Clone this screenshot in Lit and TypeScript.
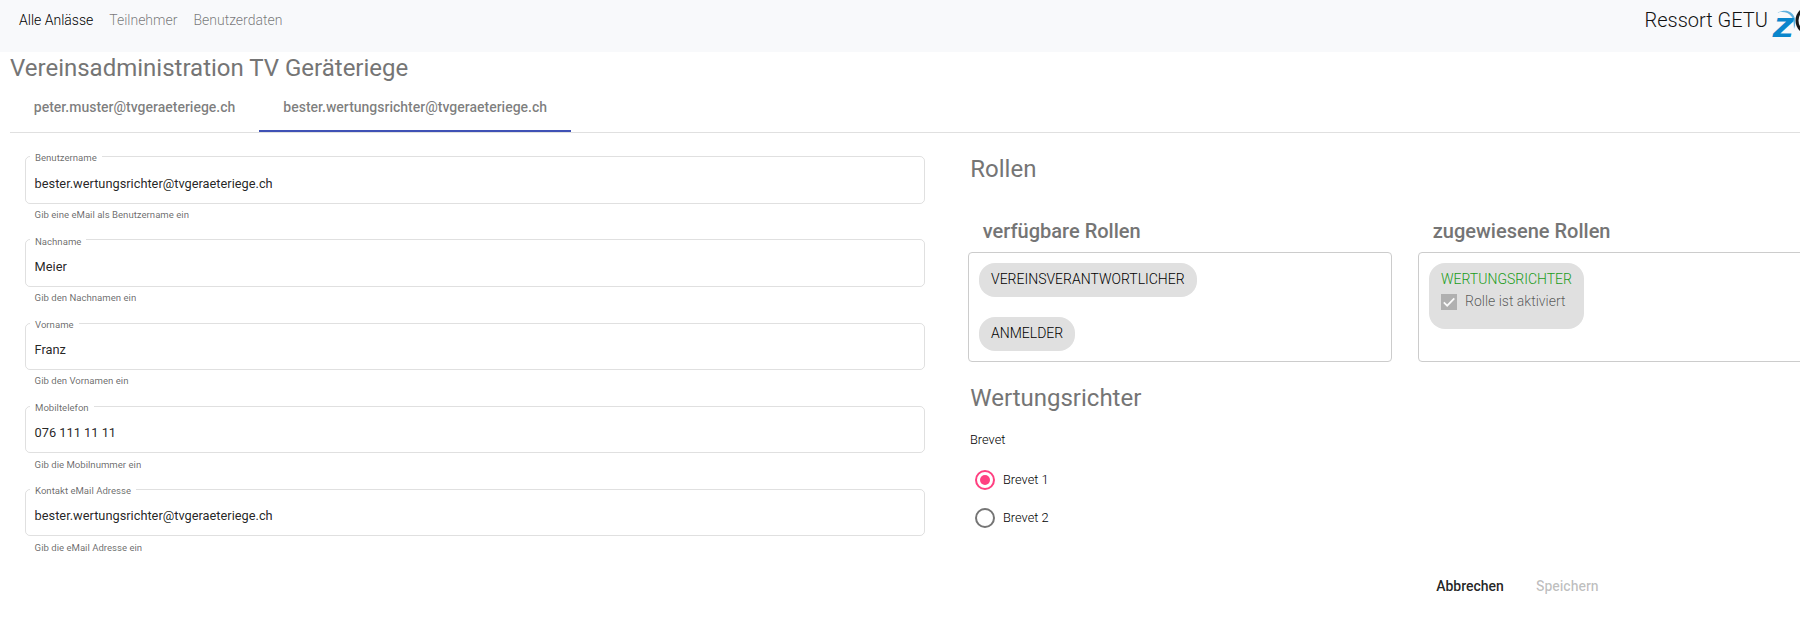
import { LitElement, html, css, svg } from "lit";
import { customElement, property, state } from "lit/decorators.js";
import { classMap } from "lit/directives/class-map.js";

@customElement("outline-field")
class OutlineField extends LitElement {
  @property() label = "";
  @property() value = "";
  @property() hint = "";

  static styles = css`
    :host { display: block; height: 83.2px; }
    .box {
      position: relative;
      box-sizing: border-box;
      height: 47.4px;
      border: 1px solid rgba(0, 0, 0, 0.12);
      border-radius: 5px;
      padding: 16.4px 8.6px 0;
      font-size: 12.8px;
      line-height: 20px;
      color: rgba(0, 0, 0, 0.87);
    }
    .label {
      position: absolute;
      top: -5.8px;
      left: 4px;
      padding: 0 5px;
      background: #fff;
      font-size: 9.6px;
      line-height: 14px;
      color: rgba(0, 0, 0, 0.6);
    }
    .hint {
      padding: 4.4px 9.6px 0;
      font-size: 9.6px;
      line-height: 14px;
      color: rgba(0, 0, 0, 0.6);
    }
  `;

  render() {
    return html`
      <div class="box"><span class="label">${this.label}</span>${this.value}</div>
      <div class="hint">${this.hint}</div>
    `;
  }
}

@customElement("app-root")
class AppRoot extends LitElement {
  @state() brevet = 1;

  tabs = ["peter.muster@tvgeraeteriege.ch", "bester.wertungsrichter@tvgeraeteriege.ch"];
  fields = [
    ["Benutzername", "bester.wertungsrichter@tvgeraeteriege.ch", "Gib eine eMail als Benutzername ein"],
    ["Nachname", "Meier", "Gib den Nachnamen ein"],
    ["Vorname", "Franz", "Gib den Vornamen ein"],
    ["Mobiltelefon", "076 111 11 11", "Gib die Mobilnummer ein"],
    ["Kontakt eMail Adresse", "bester.wertungsrichter@tvgeraeteriege.ch", "Gib die eMail Adresse ein"],
  ];

  static styles = css`
    :host {
      display: block;
      width: 100%;
      height: 639px;
      overflow: hidden;
      background: #fff;
      font-family: Roboto, sans-serif;
      font-weight: 400;
      color: #212529;
      white-space: nowrap;
    }
    header {
      display: flex;
      justify-content: space-between;
      height: 52px;
      background: #f8f9fb;
      font-weight: 300;
    }
    nav {
      display: flex;
      gap: 16px;
      padding: 10px 0 0 19px;
      font-size: 14px;
      line-height: 20px;
      color: rgba(0, 0, 0, 0.54);
    }
    nav .active { color: #000; }
    .brand {
      display: flex;
      gap: 4px;
      width: 155.5px;
      font-size: 20px;
      line-height: 40px;
      color: #111;
    }
    .logo { flex: none; width: 28px; height: 50px; }
    .z {
      font: italic 700 35px "Liberation Sans", sans-serif;
      fill: #0a86cc;
    }
    h1, h2, h3 { margin: 0; font-weight: 400; color: #757575; }
    h1, h2 { font-size: 24px; line-height: 32px; }
    h1 { padding-left: 10px; }
    h3 { padding-left: 14.8px; font-size: 20px; font-weight: 500; line-height: 32px; }
    .tabs {
      display: flex;
      margin-left: 9.8px;
      border-bottom: 1px solid #e0e0e0;
    }
    .tab {
      padding: 0 24px;
      border-bottom: 2px solid transparent;
      font-size: 14px;
      font-weight: 500;
      line-height: 46px;
      color: rgba(0, 0, 0, 0.52);
    }
    .tab.active { border-color: #3f51b5; }
    main { display: flex; }
    .form { flex: none; width: 900px; padding: 23.2px 0 0 25px; }
    .side { flex: none; padding: 20px 0 0 43px; }
    .side h2 { padding-left: 2.3px; }
    .roles { display: flex; gap: 26px; padding-top: 30px; }
    .list {
      display: flex;
      flex-direction: column;
      align-items: flex-start;
      gap: 20px;
      box-sizing: border-box;
      width: 424px;
      height: 110px;
      margin: 5px 0 0;
      padding: 10px;
      border: 1px solid #ccc;
      border-radius: 4px;
    }
    .chip {
      box-sizing: border-box;
      height: 34px;
      padding: 6px 11.9px 6px 12px;
      border-radius: 16px;
      background: #e0e0e0;
      font-size: 14px;
      font-weight: 300;
      line-height: 20px;
      color: #000;
    }
    .chip.assigned { height: 66px; color: #1a9c1a; }
    .check {
      display: flex;
      gap: 8px;
      padding-top: 2px;
      color: rgba(0, 0, 0, 0.62);
    }
    .check svg { margin-top: 3px; }
    .judge { padding-top: 20px; }
    .caption, .option { font-size: 12.8px; font-weight: 300; line-height: 20px; color: #000; }
    .caption { padding: 16px 0 0 2px; }
    .options { display: grid; gap: 18px; padding: 20px 0 0 7px; }
    .option { display: flex; gap: 8px; }
    .radio {
      display: flex;
      align-items: center;
      justify-content: center;
      box-sizing: border-box;
      width: 20px;
      height: 20px;
      border: 2px solid #757575;
      border-radius: 50%;
    }
    .radio.on { border-color: #ff4081; }
    .radio.on::after {
      content: "";
      width: 10px;
      height: 10px;
      border-radius: 50%;
      background: #ff4081;
    }
    .actions {
      display: flex;
      gap: 32px;
      padding: 48px 0 0 468.2px;
      font-size: 14px;
      font-weight: 500;
      line-height: 20px;
      color: rgba(0, 0, 0, 0.87);
    }
    .actions .off { color: rgba(0, 0, 0, 0.26); }
  `;

  logo() {
    return svg`<svg class="logo" viewBox="0 0 28 50">
      <ellipse cx="38" cy="20.5" rx="13" ry="13" fill="#fff" stroke="#1a1a1a" stroke-width="3"></ellipse>
      <path d="M5.500 12.600C13 9 20 10.500 22.600 17.500C23.800 21 23.500 25 22 29C21.800 24.500 22 20 19.500 16.500C16.500 12.300 11.500 11.400 5.500 12.600Z" fill="#5fb0de"></path>
      <text class="z" transform="translate(0.500 37.400) scale(1.24 1)">z</text>
    </svg>`;
  }

  render() {
    return html`
      <header>
        <nav><span class="active">Alle Anlässe</span><span>Teilnehmer</span><span>Benutzerdaten</span></nav>
        <div class="brand"><span>Ressort GETU</span>${this.logo()}</div>
      </header>
      <h1>Vereinsadministration TV Geräteriege</h1>
      <div class="tabs">
        ${this.tabs.map((t, i) => html`<div class=${classMap({ tab: true, active: i === 1 })}>${t}</div>`)}
      </div>
      <main>
        <section class="form">
          ${this.fields.map(([l, v, h]) => html`<outline-field .label=${l} .value=${v} .hint=${h}></outline-field>`)}
        </section>
        <section class="side">
          <h2>Rollen</h2>
          <div class="roles">
            <div>
              <h3>verfügbare Rollen</h3>
              <div class="list">
                <div class="chip">VEREINSVERANTWORTLICHER</div>
                <div class="chip">ANMELDER</div>
              </div>
            </div>
            <div>
              <h3>zugewiesene Rollen</h3>
              <div class="list">
                <div class="chip assigned">
                  WERTUNGSRICHTER
                  <div class="check">
                    <svg width="16" height="16" viewBox="0 0 16 16">
                      <rect width="16" height="16" fill="#b0b0b0"></rect>
                      <path d="M2.800 8.300L6.200 11.700L13.300 4.300" fill="none" stroke="#fafafa" stroke-width="1.700"></path>
                    </svg>
                    <span>Rolle ist aktiviert</span>
                  </div>
                </div>
              </div>
            </div>
          </div>
          <h2 class="judge">Wertungsrichter</h2>
          <div class="caption">Brevet</div>
          <div class="options">
            ${[1, 2].map((n) => html`
              <div class="option" @click=${() => (this.brevet = n)}>
                <span class=${classMap({ radio: true, on: this.brevet === n })}></span>
                <span>Brevet ${n}</span>
              </div>`)}
          </div>
          <div class="actions"><span>Abbrechen</span><span class="off">Speichern</span></div>
        </section>
      </main>
    `;
  }
}
